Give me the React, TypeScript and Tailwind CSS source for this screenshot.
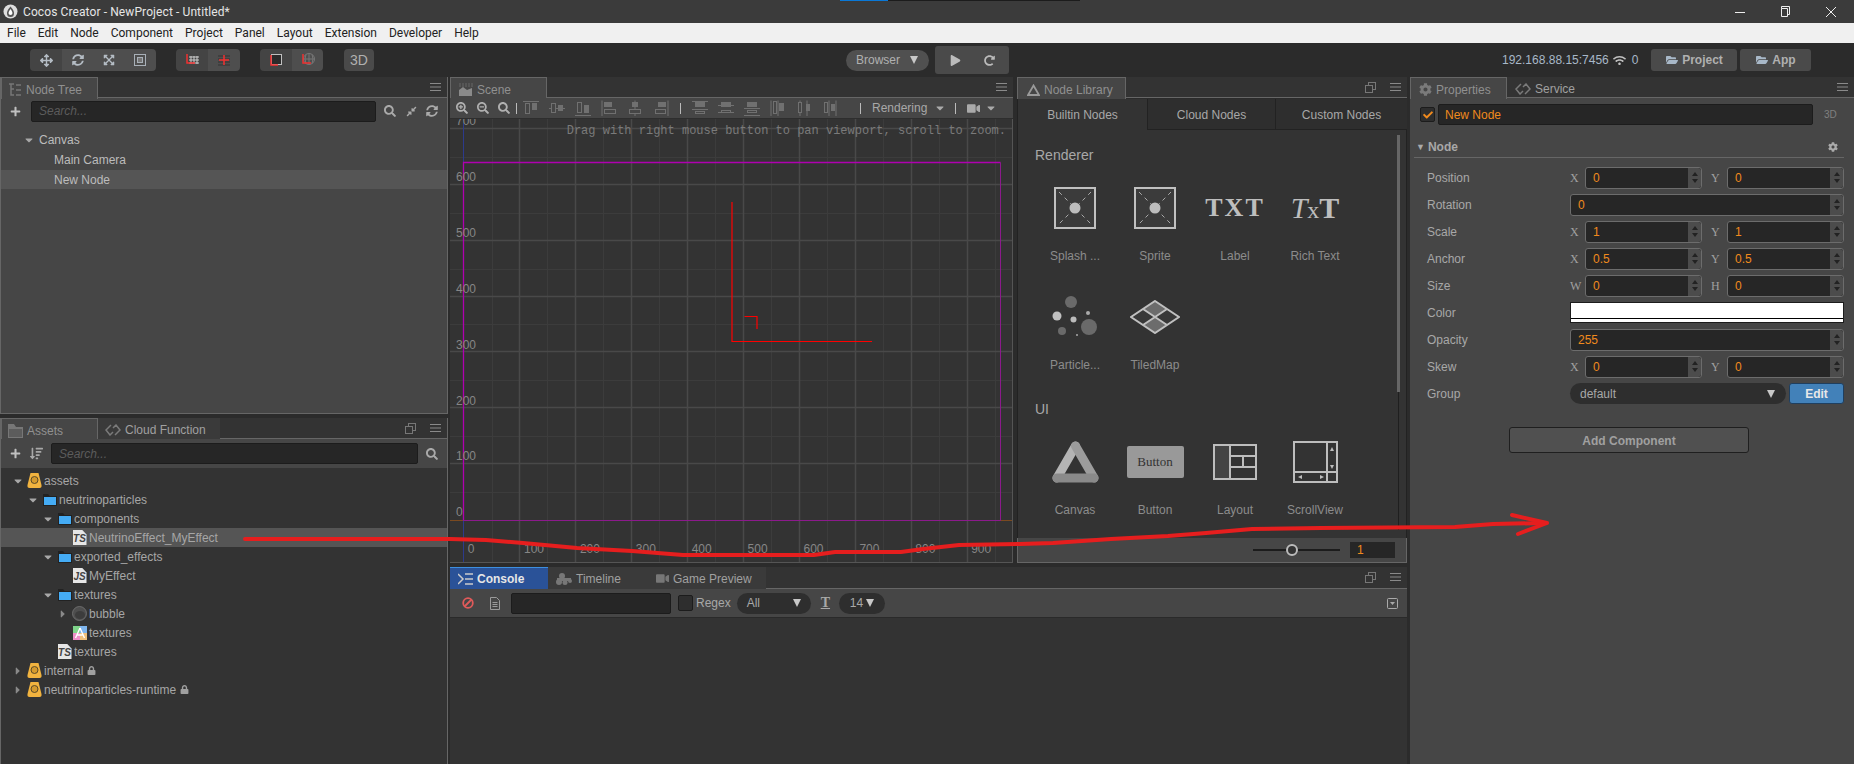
import type { ReactNode } from 'react';
import {
  FaArrowsAlt,
  FaCaretDown,
  FaCaretRight,
  FaCheck,
  FaCog,
  FaCompressAlt,
  FaExpandArrowsAlt,
  FaFolderOpen,
  FaLock,
  FaPlay,
  FaPlus,
  FaRedoAlt,
  FaSearch,
  FaSearchMinus,
  FaSearchPlus,
  FaSortAmountDown,
  FaSyncAlt,
  FaVideo,
  FaWifi,
} from 'react-icons/fa';

const menus = ['File', 'Edit', 'Node', 'Component', 'Project', 'Panel', 'Layout', 'Extension', 'Developer', 'Help'];

function MenuLines() {
  return (
    <svg width="11" height="10" viewBox="0 0 11 10" className="text-[#8a8a8a]">
      <path d="M0 1.5h11M0 5h11M0 8.5h11" stroke="currentColor" strokeWidth="1" />
    </svg>
  );
}

function RestoreIcon() {
  return (
    <svg width="11" height="11" viewBox="0 0 11 11" fill="none" stroke="#777" strokeWidth="1">
      <rect x="3.5" y="0.5" width="7" height="7" />
      <rect x="0.5" y="3.5" width="7" height="7" fill="#333" />
    </svg>
  );
}

function DiamondLink() {
  return (
    <svg width="16" height="12" viewBox="0 0 16 12" fill="none" stroke="#7a7a7a" strokeWidth="1.5">
      <path d="M6 1 1 6l4 5 3-3M10 11l5-5-4-5-3 3" />
    </svg>
  );
}

function Tri() {
  return <span className="h-0 w-0 border-x-[4px] border-t-[8px] border-x-transparent border-t-[#c8c8c8]" />;
}

function Tab({ icon, label, active, width, cls = '' }: { icon?: ReactNode; label: string; active?: boolean; width: string; cls?: string }) {
  return (
    <div
      className={`${width} ${cls} -mb-px flex h-[22px] items-center gap-[4px] pt-[2px] ${
        active ? 'border-x border-t border-[#666] bg-[#464646] text-[#909090]' : 'bg-[#3a3a3a] text-[#a0a0a0]'
      }`}
    >
      {icon}
      <span>{label}</span>
    </div>
  );
}

function TabStrip({ children, restore, h = 'h-[21px]' }: { children: ReactNode; restore?: boolean; h?: string }) {
  return (
    <div className={`${h} flex shrink-0 items-start border-b border-[#666] bg-[#333]`}>
      {children}
      <div className="ml-auto flex h-[20px] items-center gap-[14px] pr-[6px]">
        {restore && <RestoreIcon />}
        <MenuLines />
      </div>
    </div>
  );
}

function SearchBox({ w }: { w: string }) {
  return (
    <div className={`${w} flex h-[21px] items-center rounded-[2px] border border-[#1c1c1c] bg-[#262626] pl-[7px] italic text-[#5c5c5c]`}>
      Search...
    </div>
  );
}

function Caret({ open }: { open: boolean }) {
  return open ? <FaCaretDown size={12} color="#a8a8a8" /> : <FaCaretRight size={12} color="#8a8a8a" />;
}

function DbIcon() {
  return (
    <svg width="15" height="17" viewBox="0 0 15 17">
      <path d="M3.5 1h8l3 12q.5 3-2 3H2.500q-2.500 0-2-3z" fill="#f1b33f" />
      <circle cx="7.500" cy="8" r="3.500" fill="#d49a2e" stroke="#5a4a2a" strokeWidth="1" />
    </svg>
  );
}

function FolderIcon() {
  return (
    <svg width="14" height="12" viewBox="0 0 14 12">
      <path d="M0 0h5l1.500 2H14v10H0z" fill="#222" />
      <path d="M1 3h12v8H1z" fill="#45acf5" />
    </svg>
  );
}

function FileIcon({ kind }: { kind: string }) {
  return (
    <div className="flex h-[15px] w-[14px] items-end justify-center bg-[#e6e6e6] text-[10px] font-bold italic leading-[12px] text-[#444] [clip-path:polygon(0_0,70%_0,100%_30%,100%_100%,0_100%)]">
      {kind}
    </div>
  );
}

function BubbleIcon() {
  return (
    <svg width="15" height="15" viewBox="0 0 15 15">
      <circle cx="7.500" cy="7.500" r="7" fill="#4e4e4e" stroke="#777" strokeWidth="0.800" />
      <ellipse cx="8" cy="9" rx="5" ry="4" fill="#3c3c3c" />
    </svg>
  );
}

function AtlasIcon() {
  return (
    <svg width="14" height="14" viewBox="0 0 14 14">
      <rect width="7" height="7" fill="#7fd48a" />
      <rect x="7" width="7" height="7" fill="#7fb6ee" />
      <rect y="7" width="7" height="7" fill="#ee8fc8" />
      <rect x="7" y="7" width="7" height="7" fill="#f0c07a" />
      <path d="M7 2 11.500 12M7 2 2.500 12M4.500 9h5" stroke="#fff" strokeWidth="1.400" fill="none" />
    </svg>
  );
}

const assetRows: { level: number; name: string; open?: boolean; icon: ReactNode; lock?: boolean; on?: boolean }[] = [
  { level: 0, name: 'assets', open: true, icon: <DbIcon /> },
  { level: 1, name: 'neutrinoparticles', open: true, icon: <FolderIcon /> },
  { level: 2, name: 'components', open: true, icon: <FolderIcon /> },
  { level: 3, name: 'NeutrinoEffect_MyEffect', icon: <FileIcon kind="TS" />, on: true },
  { level: 2, name: 'exported_effects', open: true, icon: <FolderIcon /> },
  { level: 3, name: 'MyEffect', icon: <FileIcon kind="JS" /> },
  { level: 2, name: 'textures', open: true, icon: <FolderIcon /> },
  { level: 3, name: 'bubble', open: false, icon: <BubbleIcon /> },
  { level: 3, name: 'textures', icon: <AtlasIcon /> },
  { level: 2, name: 'textures', icon: <FileIcon kind="TS" /> },
  { level: 0, name: 'internal', open: false, icon: <DbIcon />, lock: true },
  { level: 0, name: 'neutrinoparticles-runtime', open: false, icon: <DbIcon />, lock: true },
];

function AssetRow({ row }: { row: (typeof assetRows)[number] }) {
  return (
    <div
      className={`flex h-[19px] items-center ${row.on ? 'bg-[#555]' : ''}`}
      style={{ paddingLeft: 11 + row.level * 15 }}
    >
      <span className="flex w-[15px] shrink-0 items-center">{row.open !== undefined && <Caret open={row.open} />}</span>
      <span className="flex w-[15px] shrink-0 items-center justify-center">{row.icon}</span>
      <span className="ml-[2px] text-[#a6a6a6]">{row.name}</span>
      {row.lock && <FaLock size={9} color="#a0a0a0" className="ml-[4px]" />}
    </div>
  );
}

function NodeTree() {
  return (
    <div className="flex h-[337px] shrink-0 flex-col border border-t-0 border-[#666] bg-[#464646]">
      <TabStrip>
        <Tab
          width="w-[97px]"
          cls="pl-[6px]"
          active
          label="Node Tree"
          icon={
            <svg width="14" height="14" viewBox="0 0 14 14" fill="none" stroke="#777" strokeWidth="1.500">
              <path d="M1 1h5M3 1v11h3M3 6h3M8 2h5M8 7h5M8 12h5" />
            </svg>
          }
        />
      </TabStrip>
      <div className="flex h-[26px] shrink-0 items-center">
        <FaPlus size={11} color="#c0c0c0" className="ml-[9px] mr-[10px]" />
        <SearchBox w="w-[345px]" />
        <FaSearch size={12} color="#aaa" className="ml-[8px]" />
        <FaCompressAlt size={11} color="#aaa" className="ml-[10px]" />
        <FaSyncAlt size={12} color="#aaa" className="ml-[9px]" />
      </div>
      <div className="flex flex-col gap-px pt-[6px] text-[#bcbcbc]">
        <div className="flex h-[19px] items-center pl-[22px]">
          <span className="flex w-[16px]">
            <Caret open />
          </span>
          Canvas
        </div>
        <div className="flex h-[19px] items-center pl-[53px]">Main Camera</div>
        <div className="flex h-[19px] items-center bg-[#555] pl-[53px]">New Node</div>
      </div>
    </div>
  );
}

function Assets() {
  return (
    <div className="flex min-h-0 flex-1 flex-col border-x border-[#666] bg-[#333]">
      <TabStrip restore>
        <Tab
          width="w-[97px]"
          cls="pl-[6px]"
          active
          label="Assets"
          icon={
            <svg width="15" height="14" viewBox="0 0 15 14">
              <path d="M0 0h6l2 3h7v11H0z" fill="#777" />
              <path d="M1 5h13v8H1z" fill="#5c5c5c" />
            </svg>
          }
        />
        <Tab width="w-[122px]" cls="pl-[7px]" label="Cloud Function" icon={<DiamondLink />} />
      </TabStrip>
      <div className="flex h-[29px] shrink-0 items-center bg-[#464646]">
        <FaPlus size={11} color="#c0c0c0" className="ml-[9px]" />
        <FaSortAmountDown size={13} color="#a8a8a8" className="ml-[9px] mr-[8px]" />
        <SearchBox w="w-[367px]" />
        <FaSearch size={12} color="#aaa" className="ml-[8px]" />
      </div>
      <div className="flex flex-col pt-[3px]">
        {assetRows.map((row, i) => (
          <AssetRow key={i} row={row} />
        ))}
      </div>
    </div>
  );
}

// solid box, hollow box, then guide lines - all in a 16x16 box
const alignIcons: { solid: number[]; hollow: number[]; lines: number[][] }[] = [
  { solid: [9, 3, 5, 7], hollow: [2, 3, 5, 11], lines: [[0, 1, 16, 1]] },
  { solid: [9, 5, 5, 6], hollow: [2, 3, 5, 10], lines: [[0, 8, 16, 8]] },
  { solid: [9, 5, 5, 8], hollow: [2, 2, 5, 11], lines: [[0, 15, 16, 15]] },
  { solid: [3, 2, 8, 5], hollow: [3, 9, 12, 5], lines: [[1, 0, 1, 16]] },
  { solid: [5, 2, 6, 5], hollow: [2, 9, 12, 5], lines: [[8, 0, 8, 16]] },
  { solid: [5, 2, 8, 5], hollow: [2, 9, 11, 5], lines: [[15, 0, 15, 16]] },
  { solid: [3, 2, 10, 5], hollow: [3, 11, 10, 3], lines: [[0, 1, 16, 1], [0, 9, 16, 9]] },
  { solid: [3, 2, 10, 5], hollow: [3, 10, 10, 3], lines: [[0, 5, 16, 5], [0, 12, 16, 12]] },
  { solid: [3, 2, 10, 5], hollow: [3, 10, 10, 3], lines: [[0, 8, 16, 8], [0, 15, 16, 15]] },
  { solid: [9, 3, 5, 8], hollow: [3, 1, 4, 13], lines: [[1, 0, 1, 16], [8, 0, 8, 16]] },
  { solid: [10, 4, 4, 7], hollow: [2, 2, 4, 11], lines: [[4, 0, 4, 16], [11, 0, 11, 16]] },
  { solid: [9, 4, 4, 7], hollow: [2, 2, 4, 11], lines: [[7, 0, 7, 16], [14, 0, 14, 16]] },
];

function AlignIcon({ index }: { index: number }) {
  const { solid, hollow, lines } = alignIcons[index];
  return (
    <svg width="16" height="16" viewBox="0 0 16 16" fill="none" stroke="#707070" strokeWidth="1" className="shrink-0">
      {lines.map((l, i) => (
        <line key={i} x1={l[0]} y1={l[1] + 0.5} x2={l[2]} y2={l[3] + 0.5} />
      ))}
      <rect x={hollow[0] + 0.5} y={hollow[1] + 0.5} width={hollow[2] - 1} height={hollow[3] - 1} fill="#464646" />
      <rect x={solid[0]} y={solid[1]} width={solid[2]} height={solid[3]} fill="#707070" stroke="none" />
    </svg>
  );
}

function Bar() {
  return <span className="block h-[11px] w-px shrink-0 bg-[#bbb]" />;
}

const gridIdx = [0, 1, 2, 3, 4, 5, 6, 7, 8, 9];

function SceneGrid() {
  const xs = gridIdx.map((i) => Math.round(13.5 + i * 55.9));
  const ys = gridIdx.slice(0, 8).map((i) => Math.round(401 - i * 55.86));
  return (
    <svg width="563" height="444" className="absolute left-0 top-0">
      {xs.map((x) => (
        <line key={x} x1={x + 28.5} x2={x + 28.5} y1="0" y2="444" stroke="#3c3c3c" />
      ))}
      {ys.map((y) => (
        <line key={y} y1={y - 27.5} y2={y - 27.5} x1="0" x2="563" stroke="#3c3c3c" />
      ))}
      {xs.slice(1).map((x) => (
        <line key={x} x1={x + 0.5} x2={x + 0.5} y1="0" y2="444" stroke="#494949" strokeWidth="1.500" />
      ))}
      {ys.slice(1).map((y) => (
        <line key={y} y1={y - 0.5} y2={y - 0.5} x1="0" x2="563" stroke="#494949" strokeWidth="1.500" />
      ))}
      <line x1="0" x2="13" y1="401.500" y2="401.500" stroke="#7a4a20" />
      <line x1="550" x2="563" y1="401.500" y2="401.500" stroke="#7a4a20" />
      <line x1="13.500" x2="13.500" y1="0" y2="44" stroke="#2c3a8c" />
      <line x1="13.500" x2="13.500" y1="401" y2="444" stroke="#2c3a8c" />
      <path d="M13.500 401.500V43.500H550.500" fill="none" stroke="#b000b0" strokeWidth="1.300" />
      <path d="M550.500 43.500V401.500H13.500" fill="none" stroke="#8c1a8c" />
      <path d="M282 83V222.500H422M294.500 197.500H307V210" fill="none" stroke="#f00" strokeWidth="1.200" />
    </svg>
  );
}

const rulerX = ['0', '100', '200', '300', '400', '500', '600', '700', '800', '900'];
const rulerY = ['700', '600', '500', '400', '300', '200', '100', '0'];

function Scene() {
  return (
    <div className="flex w-[563px] shrink-0 flex-col">
      <TabStrip>
        <Tab
          width="w-[97px]"
          cls="pl-[8px]"
          active
          label="Scene"
          icon={
            <svg width="14" height="14" viewBox="0 0 14 14">
              <path d="M0 13V7l4-3 4 3 5-2v8z" fill="#8a8a8a" />
              <path d="M0 1h14M0 3h14" stroke="#666" strokeDasharray="2 1" />
            </svg>
          }
        />
      </TabStrip>
      <div className="flex h-[21px] shrink-0 items-center border-b border-[#2e2e2e] bg-[#464646] pl-[6px] text-[#a8a8a8]">
        <FaSearchPlus size={12} color="#b0b0b0" />
        <FaSearchMinus size={12} color="#b0b0b0" className="ml-[9px]" />
        <FaSearch size={12} color="#b0b0b0" className="ml-[9px]" />
        <span className="ml-[6px]">
          <Bar />
        </span>
        <span className="ml-[6px] flex gap-[10px]">
          {[0, 1, 2, 3, 4, 5].map((i) => (
            <AlignIcon key={i} index={i} />
          ))}
        </span>
        <span className="ml-[11px]">
          <Bar />
        </span>
        <span className="ml-[11px] flex gap-[10px]">
          {[6, 7, 8, 9, 10, 11].map((i) => (
            <AlignIcon key={i} index={i} />
          ))}
        </span>
        <span className="ml-[22px]">
          <Bar />
        </span>
        <span className="ml-[11px]">Rendering</span>
        <FaCaretDown size={12} color="#aaa" className="ml-[7px]" />
        <span className="ml-[9px]">
          <Bar />
        </span>
        <FaVideo size={13} color="#aaa" className="ml-[11px]" />
        <FaCaretDown size={12} color="#aaa" className="ml-[5px]" />
      </div>
      <div className="relative h-[444px] shrink-0 overflow-hidden border-b border-r border-[#555] bg-[#333]">
        <SceneGrid />
        {rulerY.map((t, i) => (
          <span key={t} className="absolute left-[6px] text-[#868686]" style={{ top: -5 + i * 55.9 }}>
            {t}
          </span>
        ))}
        {rulerX.map((t, i) => (
          <span
            key={t}
            className="absolute top-[423px] w-[40px] text-center text-[#868686]"
            style={{ left: i === 0 ? 1 : 64 + (i - 1) * 55.9 }}
          >
            {t}
          </span>
        ))}
        <span className="absolute right-[6px] top-[5px] font-['Liberation_Mono',monospace] text-[12px] text-[#7a7a7a]">
          Drag with right mouse button to pan viewport, scroll to zoom.
        </span>
      </div>
    </div>
  );
}

function SpriteIcon() {
  return (
    <svg width="42" height="42" viewBox="0 0 42 42">
      <rect x="1" y="1" width="40" height="40" fill="#3b3b3b" stroke="#c0c0c0" strokeWidth="2" />
      <path d="M5 5 37 37M37 5 5 37" stroke="#aaa" strokeDasharray="4 4" />
      <circle cx="21" cy="21" r="5.500" fill="#bdbdbd" />
    </svg>
  );
}

function ParticleIcon() {
  return (
    <svg width="46" height="42" viewBox="0 0 46 42">
      <circle cx="19" cy="6" r="6" fill="#6a6a6a" />
      <circle cx="5" cy="20" r="4.500" fill="#c0c0c0" />
      <circle cx="21.500" cy="23.500" r="3" fill="#bbb" />
      <circle cx="36" cy="17" r="2" fill="#aaa" />
      <circle cx="37" cy="31" r="8" fill="#6a6a6a" />
      <circle cx="10" cy="35" r="4" fill="#6a6a6a" />
      <circle cx="25" cy="39" r="1" fill="#aaa" />
    </svg>
  );
}

function TiledMapIcon() {
  return (
    <svg width="50" height="34" viewBox="0 0 50 34">
      <path d="M25 1 49 17 25 33 1 17z" fill="#383838" />
      <path d="M25 1 37 9 25 17 13 9zM25 17 37 25 25 33 13 25z" fill="#6c6c6c" />
      <path d="M25 1 49 17 25 33 1 17zM13 9l24 16M37 9 13 25" fill="none" stroke="#c0c0c0" strokeWidth="2" />
    </svg>
  );
}

function CanvasIcon() {
  return (
    <svg width="47" height="42" viewBox="0 0 47 42" strokeWidth="9" strokeLinecap="round">
      <line x1="23.500" y1="5" x2="5" y2="37" stroke="#b4b4b4" />
      <line x1="23.500" y1="5" x2="42" y2="37" stroke="#9c9c9c" />
      <line x1="5" y1="37" x2="42" y2="37" stroke="#8a8a8a" />
    </svg>
  );
}

function LayoutIcon() {
  return (
    <svg width="44" height="36" viewBox="0 0 44 36" fill="none" stroke="#bdbdbd" strokeWidth="2">
      <rect x="1" y="1" width="42" height="34" />
      <rect x="1" y="1" width="16" height="34" fill="#444" />
      <path d="M17 12h26M17 23h26M30 12v11" />
    </svg>
  );
}

function ScrollViewIcon() {
  return (
    <svg width="45" height="42" viewBox="0 0 45 42" fill="none" stroke="#bdbdbd" strokeWidth="2">
      <rect x="1" y="1" width="43" height="40" />
      <path d="M34 1v40M1 31h43" />
      <path d="M37 10l2-4 2 4zM37 24l2 4 2-4zM9 34l-4 2 4 2zM27 34l4 2-4 2z" fill="#bdbdbd" stroke="none" />
    </svg>
  );
}

const rendererNodes: { label: string; icon: ReactNode }[] = [
  { label: 'Splash ...', icon: <SpriteIcon /> },
  { label: 'Sprite', icon: <SpriteIcon /> },
  {
    label: 'Label',
    icon: <span className="font-['Liberation_Serif',serif] text-[26px] font-bold leading-none tracking-[2px] text-[#bebebe]">TXT</span>,
  },
  {
    label: 'Rich Text',
    icon: (
      <span className="font-['Liberation_Serif',serif] text-[30px] leading-none text-[#bebebe]">
        <i>T</i>
        <span className="text-[24px]">x</span>
        <b>T</b>
      </span>
    ),
  },
  { label: 'Particle...', icon: <ParticleIcon /> },
  { label: 'TiledMap', icon: <TiledMapIcon /> },
];

const uiNodes: { label: string; icon: ReactNode }[] = [
  { label: 'Canvas', icon: <CanvasIcon /> },
  {
    label: 'Button',
    icon: (
      <div className="flex h-[32px] w-[57px] items-center justify-center rounded-[2px] bg-[#999] font-['Liberation_Serif',serif] text-[13px] text-[#333]">
        Button
      </div>
    ),
  },
  { label: 'Layout', icon: <LayoutIcon /> },
  { label: 'ScrollView', icon: <ScrollViewIcon /> },
];

function NodeCell({ label, icon }: { label: string; icon: ReactNode }) {
  return (
    <div className="flex h-[109px] w-[80px] flex-col items-center">
      <div className="flex h-[48px] items-center justify-center">{icon}</div>
      <div className="mt-[17px] text-[#8c8c8c]">{label}</div>
    </div>
  );
}

function Library() {
  return (
    <div className="flex min-w-0 flex-1 flex-col">
      <TabStrip restore>
        <Tab
          width="w-[109px]"
          cls="pl-[9px]"
          active
          label="Node Library"
          icon={
            <svg width="13" height="12" viewBox="0 0 13 12" fill="none" stroke="#9a9a9a" strokeWidth="1.800">
              <path d="M6.500 1.500 12 11H1z" />
            </svg>
          }
        />
      </TabStrip>
      <div className="flex h-[32px] shrink-0 pt-px text-center text-[#a8a8a8]">
        <div className="h-[31px] w-[130px] border-l border-[#222] bg-[#333] leading-[32px]">Builtin Nodes</div>
        <div className="h-[31px] w-[128px] border-b border-l border-[#222] bg-[#2e2e2e] leading-[32px]">Cloud Nodes</div>
        <div className="h-[31px] flex-1 border-b border-l border-[#222] bg-[#2e2e2e] leading-[32px]">Custom Nodes</div>
      </div>
      <div className="relative h-[408px] shrink-0 overflow-hidden border-x border-[#222] bg-[#333] pl-[17px] pt-[15px]">
        <div className="text-[14px] leading-[20px] text-[#a8a8a8]">Renderer</div>
        <div className="mt-[19px] flex flex-wrap">
          {rendererNodes.map((n) => (
            <NodeCell key={n.label} label={n.label} icon={n.icon} />
          ))}
        </div>
        <div className="-mt-[3px] text-[14px] leading-[20px] text-[#a8a8a8]">UI</div>
        <div className="mt-[19px] flex">
          {uiNodes.map((n) => (
            <NodeCell key={n.label} label={n.label} icon={n.icon} />
          ))}
        </div>
        <div className="absolute right-[6px] top-[5px] h-[257px] w-[3px] bg-[#666]" />
        <div className="absolute right-[7px] top-[262px] h-[138px] w-px bg-[#1f1f1f]" />
      </div>
      <div className="flex h-[25px] shrink-0 items-center border border-t-0 border-[#666] border-t-[#222] bg-[#464646]">
        <div className="relative ml-[235px] h-[2px] w-[87px] bg-[#1c1c1c]">
          <div className="absolute left-[33px] top-[-5px] h-[12px] w-[12px] rounded-full border-2 border-[#bbb] bg-[#333]" />
        </div>
        <div className="ml-[10px] h-[16px] w-[45px] bg-[#262626] pl-[7px] leading-[16px] text-[#f08a1d]">1</div>
      </div>
    </div>
  );
}

function ConsoleTab({ label, icon, active, width }: { label: string; icon: ReactNode; active?: boolean; width: string }) {
  return (
    <div
      className={`${width} -mb-px flex h-[23px] items-center gap-[4px] pl-[8px] ${
        active ? 'border-t border-[#3d8fe0] bg-[#2a5298] font-bold text-[#e6e6e6]' : 'bg-[#3a3a3a] text-[#a0a0a0]'
      }`}
    >
      {icon}
      {label}
    </div>
  );
}

function ConsolePanel() {
  return (
    <div className="flex min-h-0 flex-1 flex-col">
      <TabStrip restore h="h-[22px]">
        <ConsoleTab
          width="w-[98px]"
          active
          label="Console"
          icon={
            <svg width="15" height="12" viewBox="0 0 15 12" fill="none" stroke="#ccc" strokeWidth="1.500">
              <path d="M0 1l5 5-5 5M7 1h8M7 6h8M7 11h8" />
            </svg>
          }
        />
        <ConsoleTab
          width="w-[100px]"
          label="Timeline"
          icon={
            <svg width="16" height="12" viewBox="0 0 16 12" fill="#777">
              <circle cx="3" cy="9" r="3" />
              <circle cx="9" cy="9.500" r="2.500" />
              <circle cx="14" cy="8" r="2" />
              <circle cx="6" cy="3" r="3" />
              <path d="M1 5h14v3H1z" />
            </svg>
          }
        />
        <ConsoleTab width="w-[118px]" label="Game Preview" icon={<FaVideo size={13} color="#777" />} />
      </TabStrip>
      <div className="flex h-[29px] shrink-0 items-center border-b border-[#2a2a2a] bg-[#464646] text-[#a8a8a8]">
        <svg width="12" height="12" viewBox="0 0 12 12" fill="none" stroke="#e05a5a" strokeWidth="1.800" className="ml-[12px]">
          <circle cx="6" cy="6" r="4.800" />
          <path d="M2.500 9.500l7-7" />
        </svg>
        <svg width="12" height="13" viewBox="0 0 12 13" fill="none" stroke="#9a9a9a" className="ml-[15px]">
          <path d="M1.500.5h6l3 3v9h-9zM3.500 5.500h5M3.500 7.500h5M3.500 9.500h5" />
        </svg>
        <div className="ml-[10px] h-[21px] w-[160px] rounded-[2px] border border-[#1c1c1c] bg-[#262626]" />
        <div className="ml-[7px] h-[16px] w-[15px] rounded-[2px] border border-[#1c1c1c] bg-[#2e2e2e]" />
        <span className="ml-[3px]">Regex</span>
        <div className="ml-[6px] flex h-[21px] w-[74px] items-center justify-between rounded-full bg-[#2e2e2e] px-[10px]">
          All
          <Tri />
        </div>
        <span className="ml-[10px] font-['Liberation_Serif',serif] text-[14px] font-bold text-[#a8a8a8] underline">T</span>
        <div className="ml-[9px] flex h-[21px] w-[46px] items-center justify-center gap-[3px] rounded-full bg-[#2e2e2e]">
          14
          <Tri />
        </div>
        <svg width="11" height="11" viewBox="0 0 11 11" className="ml-auto mr-[9px]" fill="none" stroke="#aaa">
          <rect x="0.500" y="0.500" width="10" height="10" rx="1" />
          <path d="M3 4h5L5.500 7z" fill="#aaa" stroke="none" />
        </svg>
      </div>
      <div className="flex-1 bg-[#333]" />
    </div>
  );
}

function Spinner() {
  return (
    <div className="flex h-full w-[13px] shrink-0 flex-col items-center justify-center gap-[3px] rounded-r-[3px] bg-[#4c4c4c]">
      <span className="h-0 w-0 border-x-[3.500px] border-b-[4px] border-x-transparent border-b-[#222]" />
      <span className="h-0 w-0 border-x-[3.500px] border-t-[4px] border-x-transparent border-t-[#222]" />
    </div>
  );
}

function NumInput({ value, w }: { value: string; w: string }) {
  return (
    <div className={`${w} flex h-[22px] items-center rounded-[3px] border border-[#6c6c6c] bg-[#262626]`}>
      <span className="flex-1 pl-[7px] text-[#f08a1d]">{value}</span>
      <Spinner />
    </div>
  );
}

function Prop({ label, children }: { label: string; children: ReactNode }) {
  return (
    <div className="flex h-[27px] items-center">
      <span className="w-[143px] shrink-0 text-[#a8a8a8]">{label}</span>
      {children}
    </div>
  );
}

function Vec2({ a, b, va, vb }: { a: string; b: string; va: string; vb: string }) {
  return (
    <div className="flex items-center">
      <span className="w-[15px] font-['Liberation_Serif',serif] text-[#a0a0a0]">{a}</span>
      <NumInput value={va} w="w-[117px]" />
      <span className="w-[25px] pl-[9px] font-['Liberation_Serif',serif] text-[#a0a0a0]">{b}</span>
      <NumInput value={vb} w="w-[117px]" />
    </div>
  );
}

function Properties() {
  return (
    <div className="flex min-w-0 flex-1 flex-col bg-[#464646]">
      <TabStrip>
        <Tab width="w-[97px]" cls="pl-[8px]" active label="Properties" icon={<FaCog size={13} color="#7a7a7a" />} />
        <Tab width="w-[80px]" cls="!bg-transparent pl-[8px]" label="Service" icon={<DiamondLink />} />
      </TabStrip>
      <div className="mt-[6px] flex shrink-0 items-center pl-[10px]">
        <div className="flex h-[15px] w-[15px] items-center justify-center rounded-[2px] border border-[#1c1c1c] bg-[#2e2e2e]">
          <FaCheck size={10} color="#f08a1d" />
        </div>
        <div className="ml-[3px] h-[21px] w-[375px] rounded-[2px] border border-[#1c1c1c] bg-[#262626] pl-[6px] leading-[20px] text-[#f08a1d]">
          New Node
        </div>
        <span className="ml-[11px] text-[10px] text-[#808080]">3D</span>
      </div>
      <div className="ml-[4px] mr-[10px] mt-[12px] flex h-[21px] shrink-0 items-center border-b border-[#666] pl-[2px] pr-[6px]">
        <span className="mr-[3px] text-[9px] text-[#aaa]">▼</span>
        <span className="font-bold text-[#a8a8a8]">Node</span>
        <FaCog size={10} color="#aaa" className="ml-auto" />
      </div>
      <div className="flex shrink-0 flex-col pl-[17px] pt-[6px]">
        <Prop label="Position">
          <Vec2 a="X" b="Y" va="0" vb="0" />
        </Prop>
        <Prop label="Rotation">
          <NumInput value="0" w="w-[274px]" />
        </Prop>
        <Prop label="Scale">
          <Vec2 a="X" b="Y" va="1" vb="1" />
        </Prop>
        <Prop label="Anchor">
          <Vec2 a="X" b="Y" va="0.5" vb="0.5" />
        </Prop>
        <Prop label="Size">
          <Vec2 a="W" b="H" va="0" vb="0" />
        </Prop>
        <Prop label="Color">
          <div className="flex h-[21px] w-[274px] flex-col border border-[#1c1c1c] bg-white">
            <div className="h-[15px] bg-white" />
            <div className="h-px bg-black" />
          </div>
        </Prop>
        <Prop label="Opacity">
          <NumInput value="255" w="w-[274px]" />
        </Prop>
        <Prop label="Skew">
          <Vec2 a="X" b="Y" va="0" vb="0" />
        </Prop>
        <Prop label="Group">
          <div className="flex h-[21px] w-[216px] items-center justify-between rounded-full bg-[#2e2e2e] pl-[10px] pr-[11px] text-[#a8a8a8]">
            default
            <Tri />
          </div>
          <div className="ml-[3px] flex h-[21px] w-[55px] items-center justify-center rounded-[3px] border border-[#1f3f5f] bg-[#4281b9] font-bold text-[#e8e8e8]">
            Edit
          </div>
        </Prop>
      </div>
      <div className="ml-[99px] mt-[20px] flex h-[26px] w-[240px] shrink-0 items-center justify-center rounded-[3px] border border-[#1f1f1f] bg-[#505050] pt-px font-bold text-[#a0a0a0]">
        Add Component
      </div>
    </div>
  );
}

function Segment({ children, dark, w }: { children: ReactNode; dark?: boolean; w: string }) {
  return <div className={`${w} flex h-full items-center justify-center ${dark ? 'bg-[#444]' : 'bg-[#4e4e4e]'}`}>{children}</div>;
}

function GridGlyph({ globe }: { globe?: boolean }) {
  return (
    <svg width="14" height="14" viewBox="0 0 14 14" fill="none">
      {globe ? (
        <>
          <circle cx="8" cy="6" r="5.500" stroke="#777" />
          <path d="M2.500 6h11M8 .5v11M5 1.500q-2 4.500 0 9M11 1.500q2 4.500 0 9" stroke="#777" />
        </>
      ) : (
        <path d="M4 4h10M4 7h10M4 10h10M6 3v8M9 3v8M12 3v8" stroke="#ccc" />
      )}
      <path d="M2 1v9h8" stroke="#f03030" strokeWidth="1.500" />
    </svg>
  );
}

function Toolbar() {
  return (
    <div className="flex h-[34px] shrink-0 items-center bg-[#2b2b2b] text-[#c0c0c0]">
      <div className="ml-[30px] flex h-[22px] overflow-hidden rounded-[4px]">
        <Segment dark w="w-[32px]">
          <FaArrowsAlt size={13} color="#b4bcc4" />
        </Segment>
        <Segment w="w-[31px]">
          <FaSyncAlt size={12} color="#b4bcc4" />
        </Segment>
        <Segment w="w-[31px]">
          <FaExpandArrowsAlt size={12} color="#b4bcc4" />
        </Segment>
        <Segment w="w-[32px]">
          <svg width="14" height="14" viewBox="0 0 14 14" fill="none" stroke="#a8b0b8">
            <rect x="1.500" y="1.500" width="11" height="11" />
            <rect x="4.500" y="4.500" width="5" height="5" fill="#777" />
          </svg>
        </Segment>
      </div>
      <div className="ml-[20px] flex h-[22px] overflow-hidden rounded-[4px]">
        <Segment dark w="w-[32px]">
          <GridGlyph />
        </Segment>
        <Segment w="w-[32px]">
          <svg width="14" height="12" viewBox="0 0 14 12" fill="none">
            <path d="M1 2h12M1 5h12M1 8h12M1 11h12" stroke="#333" />
            <path d="M7 1v10M2 6h10" stroke="#f03030" strokeWidth="1.500" />
          </svg>
        </Segment>
      </div>
      <div className="ml-[20px] flex h-[22px] overflow-hidden rounded-[4px]">
        <Segment dark w="w-[32px]">
          <svg width="14" height="14" viewBox="0 0 14 14" fill="none">
            <rect x="2.500" y="1.500" width="10" height="10" stroke="#c0c0c0" fill="#2b2b2b" />
            <path d="M2 2v10h7" stroke="#f03030" strokeWidth="1.500" />
          </svg>
        </Segment>
        <Segment w="w-[31px]">
          <GridGlyph globe />
        </Segment>
      </div>
      <div className="ml-[21px] flex h-[22px] w-[30px] items-center justify-center rounded-[4px] bg-[#4a4a4a] text-[14px] text-[#b0b0b0]">3D</div>
      <div className="ml-[472px] flex h-[21px] w-[83px] items-center justify-between rounded-full bg-[#505050] pl-[10px] pr-[11px] text-[#b0b0b0]">
        Browser
        <Tri />
      </div>
      <div className="ml-[6px] flex h-[28px] w-[74px] items-center justify-around rounded-[3px] bg-[#4a4a4a] px-[3px]">
        <FaPlay size={11} color="#bbb" />
        <FaRedoAlt size={11} color="#bbb" />
      </div>
      <span className="ml-[493px] text-[#a8b8c8]">192.168.88.15:7456</span>
      <FaWifi size={13} color="#c0c0c0" className="ml-[4px]" />
      <span className="ml-[6px] text-[#a8b8c8]">0</span>
      <div className="ml-[13px] flex h-[22px] w-[86px] items-center justify-center gap-[4px] rounded-[3px] bg-[#4a4a4a] font-bold text-[#b0b0b0]">
        <FaFolderOpen size={12} color="#a8b8c8" />
        Project
      </div>
      <div className="ml-[3px] flex h-[22px] w-[71px] items-center justify-center gap-[4px] rounded-[3px] bg-[#4a4a4a] font-bold text-[#b0b0b0]">
        <FaFolderOpen size={12} color="#a8b8c8" />
        App
      </div>
    </div>
  );
}

export default function App() {
  return (
    <div className="relative flex h-[764px] w-[1854px] flex-col overflow-hidden bg-[#2b2b2b] font-['Liberation_Sans',Arial,sans-serif] text-[12px] leading-[14px]">
      {/* title bar */}
      <div className="flex h-[23px] shrink-0 items-center bg-[#3b3b3b] pl-[3px] pr-[11px] font-['Roboto',sans-serif] tracking-[0.1px] text-[#e6e6e6]">
        <svg width="15" height="15" viewBox="0 0 15 15" className="mr-[5px]">
          <circle cx="7.500" cy="7.500" r="7" fill="#ddd" />
          <path d="M7.500 2.500q4 4.500 3.500 7a3.500 3.500 0 0 1-7 0q-.5-2.500 3.500-7z" fill="#555" />
          <path d="M7.500 5q2 2.500 2 4a2 2 0 0 1-4 0q0-1.500 2-4z" fill="#fff" />
        </svg>
        <span>Cocos Creator - NewProject - Untitled*</span>
        <svg width="110" height="14" viewBox="0 0 110 14" className="ml-auto" fill="none" stroke="#eee">
          <path d="M2 7.500h10M48.500 3.500v-2h8v8h-2M48.500 3.500h6v8h-6zM93 2l10 10M103 2 93 12" />
        </svg>
      </div>
      <div className="absolute left-[840px] top-0 h-px w-[48px] bg-[#0a78d7]" />
      <div className="absolute left-[888px] top-0 h-px w-[192px] bg-[#1c1c1c]" />
      {/* menu */}
      <div className="flex h-[20px] shrink-0 items-center gap-[12px] bg-[#f0f0f0] pl-[7px] font-['Roboto',sans-serif] text-[#222]">
        {menus.map((m) => (
          <span key={m}>{m}</span>
        ))}
      </div>
      <Toolbar />
      <div className="flex min-h-0 flex-1">
        <div className="flex w-[448px] shrink-0 flex-col gap-[4px]">
          <NodeTree />
          <Assets />
        </div>
        <div className="ml-[2px] flex w-[957px] shrink-0 flex-col gap-[4px]">
          <div className="flex h-[486px] shrink-0 gap-[4px]">
            <Scene />
            <Library />
          </div>
          <ConsolePanel />
        </div>
        <div className="ml-[3px] flex min-w-0 flex-1">
          <Properties />
        </div>
      </div>
      {/* red annotation drawn on top of the screenshot */}
      <svg width="1854" height="764" className="pointer-events-none absolute left-0 top-0" fill="none" stroke="#e61e1e" strokeWidth="4" strokeLinecap="round" strokeLinejoin="round">
        <path d="M245 539 450 539 486 540 523 543 577 548 632 551 683 555 741 555 814 555 835 552 901 552 923 549 959 545 1020 544 1053 543 1111 539 1168 536 1206 533 1252 529 1321 528 1455 527 1493 524 1545 523" />
        <path d="M1512 515 1547 523 1518 534" />
      </svg>
    </div>
  );
}
